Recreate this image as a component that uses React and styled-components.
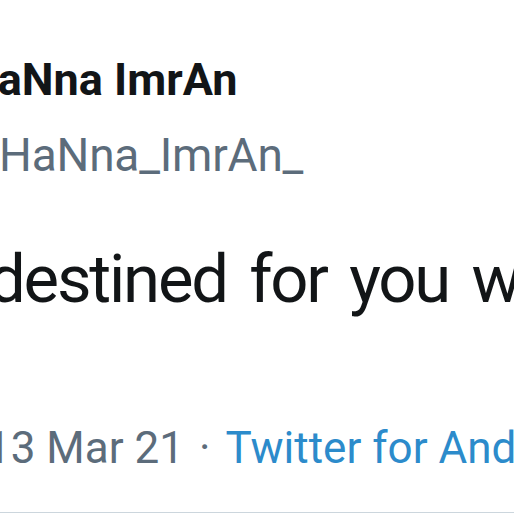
import styled, { createGlobalStyle } from 'styled-components';

const GlobalStyle = createGlobalStyle`
  html, body {
    margin: 0;
    padding: 0;
    background: #ffffff;
  }
  body {
    font-family: Roboto, "Liberation Sans", Arial, sans-serif;
  }
`;

const Frame = styled.div`
  width: 514px;
  height: 514px;
  overflow: hidden;
  background: #ffffff;
`;

const Tweet = styled.article`
  display: flex;
  flex-direction: column;
  padding-top: 53px;
  white-space: nowrap;
`;

const Identity = styled.div`
  display: flex;
  flex-direction: column;
  gap: 21px;
  margin-left: -34px;
`;

const Name = styled.div`
  font-size: 45px;
  line-height: 54px;
  font-weight: 700;
  color: #121517;
`;

const Handle = styled.div`
  margin-left: -8px;
  font-size: 46px;
  line-height: 54px;
  letter-spacing: -0.2px;
  color: #5c6c7b;
`;

const Body = styled.p`
  margin: 57px 0 0 -12px;
  font-size: 67px;
  line-height: 80px;
  letter-spacing: -2.2px;
  word-spacing: 8px;
  color: #121517;
`;

const Meta = styled.div`
  display: flex;
  gap: 15px;
  margin: 103px 0 0 -14px;
  font-size: 44px;
  line-height: 52px;
  color: #5c6c7b;
`;

const Source = styled.span`
  color: #2c8bcb;
`;

const Divider = styled.hr`
  margin: 38px 0 0;
  border: none;
  border-top: 1px solid #ccd6dd;
`;

export default function App() {
  return (
    <Frame>
      <GlobalStyle />
      <Tweet>
        <Identity>
          <Name>HaNna ImrAn</Name>
          <Handle>@HaNna_ImrAn_</Handle>
        </Identity>
        <Body>destined for you will find you</Body>
        <Meta>
          <span>13 Mar 21</span>
          <span>·</span>
          <Source>Twitter for Android</Source>
        </Meta>
        <Divider />
      </Tweet>
    </Frame>
  );
}
